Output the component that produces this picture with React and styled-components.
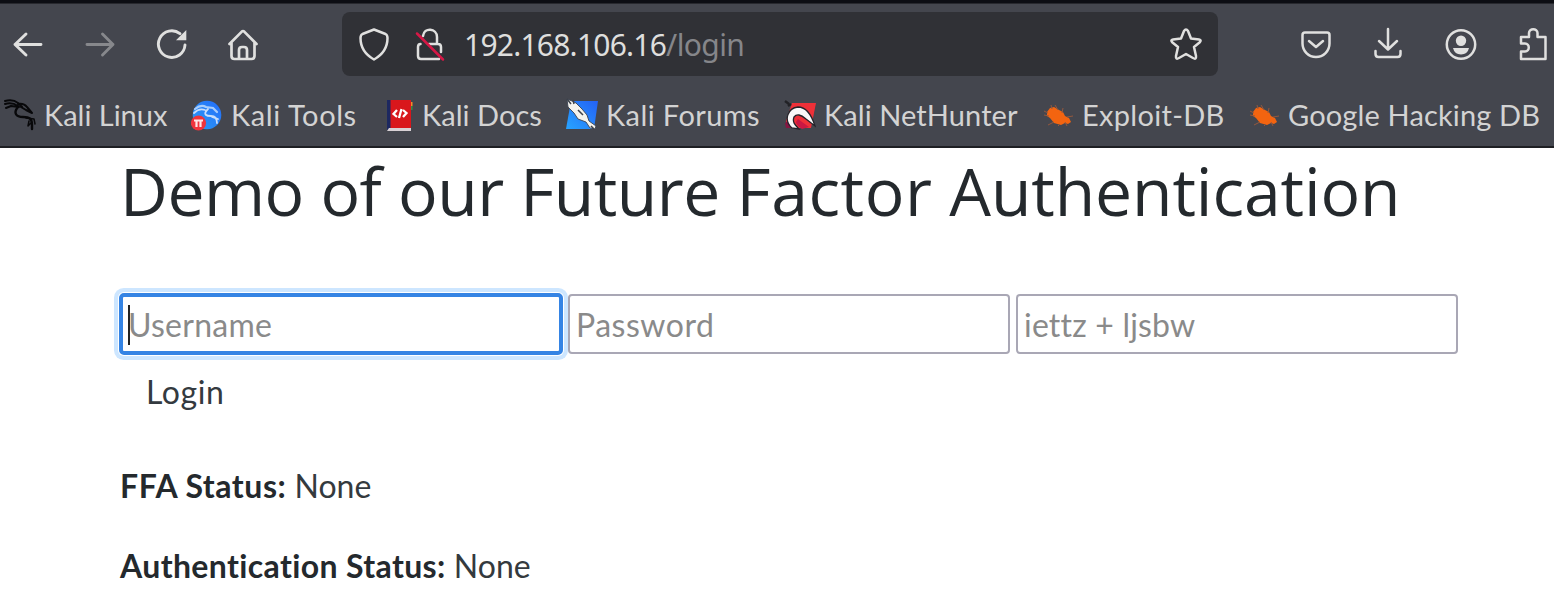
import React from 'react';
import styled, { createGlobalStyle } from 'styled-components';

const Global = createGlobalStyle`
  *, *::before, *::after { box-sizing: border-box; }
  body { margin: 0; background: #fff; overflow: hidden; }
`;

const Window = styled.div`
  width: 1554px;
  height: 602px;
  overflow: hidden;
  font-family: Lato, 'Noto Sans', sans-serif;
  font-variant-ligatures: none;
  color: #24292d;
  background: #fff;
`;

const TabEdge = styled.div`
  height: 4px;
  background: #0c0d13;
  border-bottom: 1px solid #27282e;
`;

const Toolbar = styled.header`
  display: flex;
  align-items: center;
  height: 85px;
  padding: 0 0 5px 8px;
  background: #44464e;
`;

const NavGroup = styled.nav`
  display: flex;
  gap: 31.5px;
  width: 334px;
`;

const IconButton = styled.span`
  display: flex;
  width: 40px;
  height: 40px;
  color: ${p => (p.$dim ? '#87888c' : '#e0e0df')};
`;

const SiteInfo = styled(IconButton)`
  margin-left: 16px;
`;

const UrlBar = styled.div`
  display: flex;
  align-items: center;
  width: 876px;
  height: 64px;
  padding: 0 12px;
  border-radius: 8px;
  background: #303136;
`;

const Url = styled.span`
  flex: 1;
  margin: 2px 0 0 14px;
  font: 30px/44px 'Noto Sans', sans-serif;
  letter-spacing: -0.77px;
  color: #dededd;
  white-space: nowrap;
`;

const UrlPath = styled.span`
  color: #85868a;
  letter-spacing: -0.6px;
`;

const Actions = styled.div`
  display: flex;
  gap: 32.5px;
  margin-left: 78px;
`;

const Bookmarks = styled.div`
  display: flex;
  height: 59px;
  padding: 0 0 5px 4px;
  align-items: center;
  background: #44464e;
  border-bottom: 2px solid #1e1f23;
`;

const Bookmark = styled.span`
  display: flex;
  flex: none;
  align-items: center;
  gap: 8px;
  width: ${p => p.$w}px;
  font-size: 29px;
  line-height: 40px;
  letter-spacing: ${p => p.$ls}px;
  color: #d3d3d3;
  white-space: nowrap;
`;

const Page = styled.main`
  padding: 2px 0 0 120px;
`;

const Title = styled.h1`
  margin: 0;
  font: 400 66px/80px 'Open Sans', sans-serif;
  letter-spacing: -0.5px;
  white-space: nowrap;
`;

const TitleWord = styled.span`
  letter-spacing: ${p => p.$ls}px;
`;

const Fields = styled.div`
  display: flex;
  gap: 6px;
  margin-top: 64px;
`;

const Field = styled.div`
  display: flex;
  align-items: center;
  width: 442px;
  height: 60px;
  padding: 1px 6px 0;
  border: 2px solid #a9a7b5;
  border-radius: 4px;
  font-size: 32px;
  line-height: 40px;
  letter-spacing: ${p => p.$ls}px;
  color: #8a8a8a;
  white-space: nowrap;
  ${p => p.$focus && `
    border-color: transparent;
    outline: 4px solid #3584e4;
    outline-offset: -3px;
    box-shadow: 0 0 0 2px #fff, 0 0 0 6px #cde6ff;
  `}
`;

const Caret = styled.i`
  width: 2px;
  height: 40px;
  margin-right: -2px;
  background: #222;
`;

const Login = styled.button`
  display: block;
  margin: 18px 0 0;
  padding: 0 26px;
  border: 0;
  background: none;
  font: 32px/40px Lato, sans-serif;
  letter-spacing: 0.6px;
  color: #343a40;
`;

const Status = styled.p`
  margin: ${p => p.$top}px 0 0;
  font-size: 32px;
  line-height: 40px;
  color: #343a3e;
  white-space: nowrap;
`;

const StatusLabel = styled.b`
  letter-spacing: ${p => p.$ls}px;
  color: #24292d;
`;

const Line = ({ children, sw = 2.5 }) => (
  <svg width="40" height="40" viewBox="0 0 40 40" fill="none" stroke="currentColor" strokeWidth={sw} strokeLinecap="round" strokeLinejoin="round">{children}</svg>
);

const KaliIcon = () => (
  <svg width="32" height="36" viewBox="0 0 32 36" fill="none" stroke="#08080a" strokeLinecap="round" strokeLinejoin="round">
    <path d="M1 4Q9 2 14 6L18 10M1 7Q8 5 14 9M2 11L7 9L15 10" strokeWidth="2" />
    <path d="M14 7Q20 6 23 10L28 16L22 13L17 10" strokeWidth="2" />
    <path d="M14 10C9 16 12 20 19 20S28 22 28 28V32" strokeWidth="2.4" />
    <path d="M22 21L30 22L31 27M25 24L24 29L27 26" strokeWidth="1.5" />
  </svg>
);

const ToolsIcon = () => (
  <svg width="32" height="36" viewBox="0 0 32 36">
    <defs><linearGradient id="tools" x1="0" y1="1" x2="1" y2="0"><stop stopColor="#2a9df8" /><stop offset="1" stopColor="#246cf8" /></linearGradient></defs>
    <circle cx="16" cy="18" r="14.3" fill="url(#tools)" />
    <path d="M4 12Q10 7 15 10L22 11L26 15" fill="none" stroke="#a9cdfb" strokeWidth="2.2" strokeLinecap="round" />
    <path d="M3 16Q8 11 14 13M17 12C11 18 16 19 20 19S26 22 26 26M21 20L27 22" fill="none" stroke="#c8ddfb" strokeWidth="1.8" strokeLinecap="round" />
    <circle cx="7.5" cy="26" r="7.6" fill="#ef343c" />
    <path d="M3 23.5H12M5.5 23V30M9.5 23V30" fill="none" stroke="#ffe7e7" strokeWidth="2.2" />
  </svg>
);

const DocsIcon = () => (
  <svg width="28" height="36" viewBox="0 0 28 36">
    <path d="M1 3H25V31H1Z" fill="#d9171c" />
    <path d="M1 3H4.5V31L1 33Z" fill="#1d2860" />
    <path d="M3 31H25V34H1Z" fill="#d8d1d5" />
    <path d="M25 5h1.5v4H25z" fill="#f28c28" /><path d="M25 9h1.5v4H25z" fill="#398b43" />
    <path d="M11 13L7.5 17L11 20M17 13L20.5 16L17 20M15.5 12L13 21" fill="none" stroke="#fff" strokeWidth="2.3" />
  </svg>
);

const ForumsIcon = () => (
  <svg width="32" height="36" viewBox="0 0 32 36">
    <defs><linearGradient id="forum" x1="0" y1="1" x2="1" y2="0"><stop stopColor="#27a4ff" /><stop offset="1" stopColor="#2461f5" /></linearGradient></defs>
    <path d="M5 4H32L28 32H0Z" fill="url(#forum)" />
    <path d="M1 2L6 4L10 6L16 12L21 18L23 24L30 29L29 32L24 31L20 25L12 22L8 16L2 10Z" fill="#f4f3ed" stroke="#3b4453" strokeWidth=".9" />
    <path d="M1 2L5 7M7 3L8 7M12 13L17 18M25 29L28 32" stroke="#3d4149" strokeWidth="1.5" />
  </svg>
);

const HunterIcon = () => (
  <svg width="32" height="36" viewBox="0 0 32 36">
    <path d="M8 6H32L27 31H4L2 24Z" fill="#ee3038" />
    <path d="M1 26L6 23L8 31H2Z" fill="#851742" />
    <path d="M1 4L5 7M7 7L4 9" stroke="#222226" strokeWidth="2.4" fill="none" />
    <path d="M14 22L25 30L18 32Q12 28 12 25Z" fill="#c91843" />
    <path d="M8 31C-1 23 4 11 14 10Q25 10 31 29L22 22Q14 15 10 20C8 25 11 28 15 32Z" fill="#faf8f8" stroke="#24232a" strokeWidth="1.3" />
  </svg>
);

const BugIcon = () => (
  <svg width="32" height="36" viewBox="0 0 32 36">
    <path d="M5 15L8 11L12 10L17 13L21 15L23 19L27 21L29 25L26 27L23 26L19 28L12 26L8 21L5 19Z" fill="#f36410" />
    <path d="M10 12L9 8M16 13L13 8M20 16L21 11M6 16L2 14M7 19L2 18M25 20L31 19M12 25L6 28M18 27L16 29M23 25L25 29" fill="none" stroke="#94583d" strokeWidth="1" />
  </svg>
);

const bookmarks = [
  ['Kali Linux', KaliIcon, 187, 0],
  ['Kali Tools', ToolsIcon, 195, 0.6],
  ['Kali Docs', DocsIcon, 180, 0.05],
  ['Kali Forums', ForumsIcon, 218, 0.42],
  ['Kali NetHunter', HunterIcon, 258, 0.1],
  ['Exploit-DB', BugIcon, 206, 0.3],
  ['Google Hacking DB', BugIcon, 300, 0.15],
];

export default function App() {
  return (
    <Window>
      <Global />
      <TabEdge />
      <Toolbar>
        <NavGroup>
          <IconButton><Line sw={2.9}><path d="M33 20.5H7M18 10L7 20.5L18 31" /></Line></IconButton>
          <IconButton $dim><Line sw={2.9}><path d="M7 20.5H33M22.5 10L33 20.5L22.5 31" /></Line></IconButton>
          <IconButton><Line sw={2.9}><path d="M34 21A13.3 13.3 0 1 1 29 9.7" /><path d="M35.3 6V16.3H25Z" fill="currentColor" stroke="none" /></Line></IconButton>
          <IconButton><Line sw={2.7}><path d="M6.5 20L18.8 7.6Q20 6.5 21.2 7.6L33.5 20M8.5 18.5V32Q8.5 35 11.5 35H28.5Q31.5 35 31.5 32V18.5M16 35V26Q16 23 19 23H21Q24 23 24 26V35" /></Line></IconButton>
        </NavGroup>
        <UrlBar>
          <IconButton><Line><path d="M20 5.5L31.5 10Q33.5 11 33.5 14C33.5 24 28 31 20 35.5C12 31 6.5 24 6.5 14Q6.5 11 8.5 10Z" /></Line></IconButton>
          <SiteInfo><Line><path d="M13 12C14 3 27 4 27 13V20M10.5 20Q8 20 8 23V32Q8 35 11 35H29M19 20H28Q31 20 31 23V28" /><path d="M7 9.5L33 35.5" stroke="#d61846" /></Line></SiteInfo>
          <Url>192.168.106.16<UrlPath>/login</UrlPath></Url>
          <IconButton><Line><path d="M20 5.5Q21 5.5 22 7L25 14.5L33 15.5Q36 16 33.5 18.5L28 23L30 32Q30.5 36 27 34L20 30L13 34Q9.5 36 10 32L12 23L6.5 18.5Q4 16 7 15.5L15 14.5L18 7Q19 5.5 20 5.5Z" /></Line></IconButton>
        </UrlBar>
        <Actions>
          <IconButton><Line><path d="M9 8.5H31Q33.5 8.5 33.5 11V19.5A13.5 13.5 0 0 1 6.5 19.5V11Q6.5 8.5 9 8.5Z" /><path d="M13 17L20 23L27 17" /></Line></IconButton>
          <IconButton><Line><path d="M19 5V25M10 17L19 25.5L28 17M6.5 27V30Q6.5 33 9.5 33H28.5Q31.5 33 31.5 30V27" /></Line></IconButton>
          <IconButton><Line><circle cx="20" cy="20.5" r="14.2" /><g fill="currentColor" stroke="none"><circle cx="20" cy="16.8" r="5.2" /><path d="M12 24H28Q26.5 30.5 20 30.5T12 24Z" /></g></Line></IconButton>
          <IconButton><Line><path d="M7 13H15V9C15 4 23.5 4 23.5 9V13H31.5V35H7V27.5H11C16 27.5 16 19.5 11 19.5H7Z" /></Line></IconButton>
        </Actions>
      </Toolbar>
      <Bookmarks>
        {bookmarks.map(([name, Icon, w, ls]) => (
          <Bookmark key={name} $w={w} $ls={ls}><Icon />{name}</Bookmark>
        ))}
      </Bookmarks>
      <Page>
        <Title>
          Demo of our Future <TitleWord $ls={0.6}>Factor</TitleWord> <TitleWord $ls={-0.1}>Authentication</TitleWord>
        </Title>
        <Fields>
          <Field $focus $ls={0.25}><Caret />Username</Field>
          <Field $ls={0.5}>Password</Field>
          <Field $ls={0.2}>iettz + ljsbw</Field>
        </Fields>
        <Login>Login</Login>
        <Status $top={54}><StatusLabel $ls={0.55}>FFA Status:</StatusLabel> None</Status>
        <Status $top={40}><StatusLabel $ls={0.37}>Authentication Status:</StatusLabel> None</Status>
      </Page>
    </Window>
  );
}
